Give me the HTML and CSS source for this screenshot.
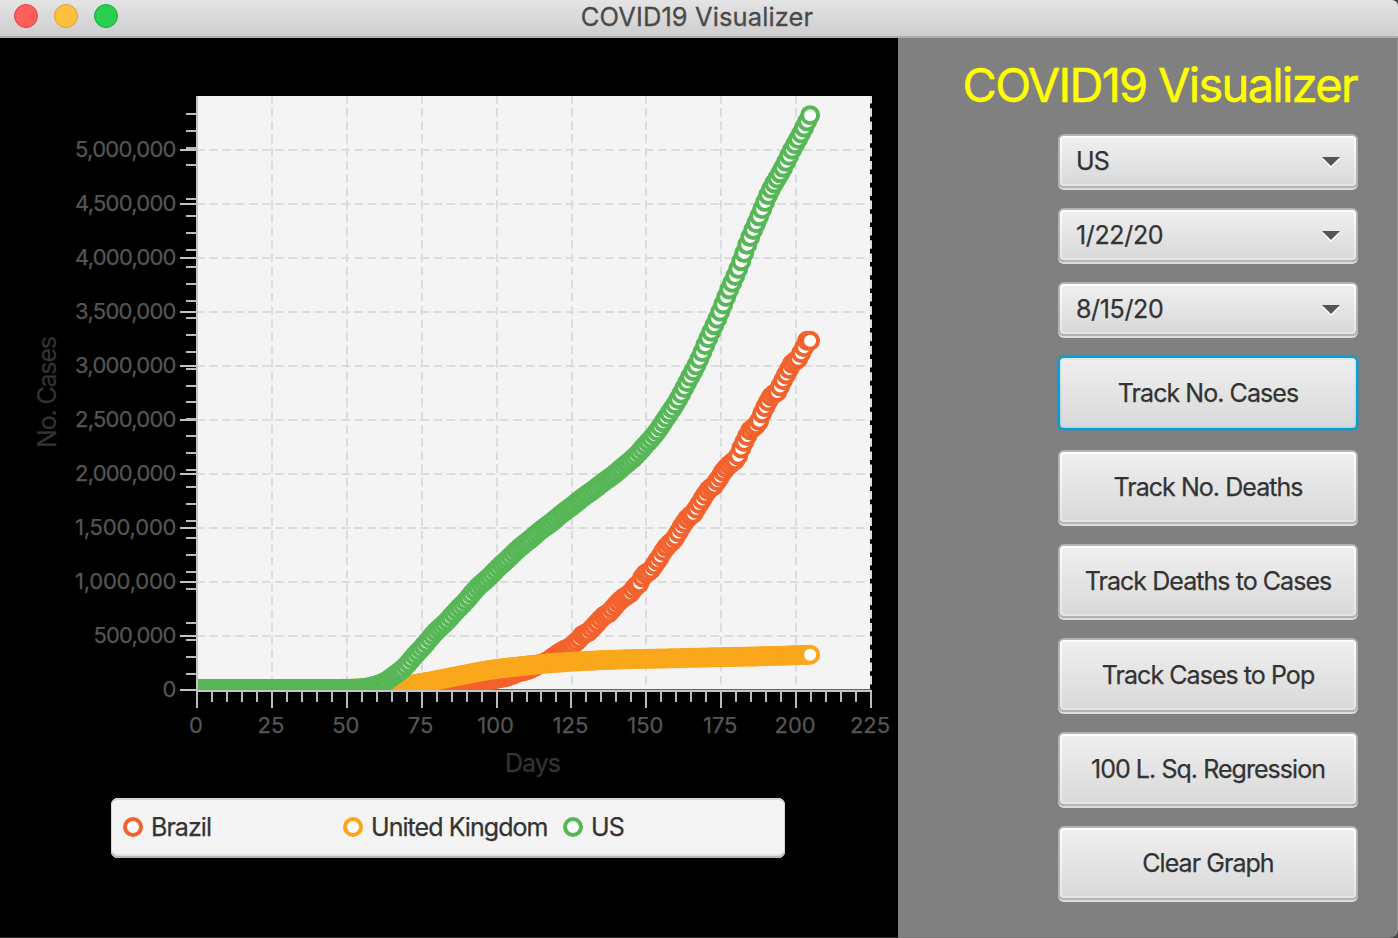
FILE: index.html
```
<!DOCTYPE html>
<html lang="en">
<head>
<meta charset="utf-8">
<title>COVID19 Visualizer</title>
<link rel="stylesheet" href="styles.css">
</head>
<body>
<div class="window">
  <header class="titlebar">
    <div class="lights"><span class="light red"></span><span class="light amber"></span><span class="light green"></span></div>
    <div class="window-title">COVID19 Visualizer</div>
  </header>
  <main class="content">
    <section class="chart-pane">
      <svg class="chart" id="chart" width="898" height="752" viewBox="0 38 898 752"></svg>
      <div class="legend">
        <div class="legend-item"><span class="dot brazil"></span>Brazil</div>
        <div class="legend-item"><span class="dot uk"></span>United Kingdom</div>
        <div class="legend-item"><span class="dot us"></span>US</div>
      </div>
    </section>
    <aside class="side">
      <h1 class="heading">COVID19 Visualizer</h1>
      <div class="controls">
        <div class="control combo"><span class="face"><span>US</span><svg class="arrow" width="18" height="12" viewBox="0 0 18 12"><path d="M0 2H18L9 11Z" fill="#fff"/><path d="M0 0H18L9 9Z" fill="#555"/></svg></span></div>
        <div class="control combo date"><span class="face"><span>1/22/20</span><svg class="arrow" width="18" height="12" viewBox="0 0 18 12"><path d="M0 2H18L9 11Z" fill="#fff"/><path d="M0 0H18L9 9Z" fill="#555"/></svg></span></div>
        <div class="control combo date"><span class="face"><span>8/15/20</span><svg class="arrow" width="18" height="12" viewBox="0 0 18 12"><path d="M0 2H18L9 11Z" fill="#fff"/><path d="M0 0H18L9 9Z" fill="#555"/></svg></span></div>
        <button class="control action focused"><span class="face">Track No. Cases</span></button>
        <button class="control action"><span class="face">Track No. Deaths</span></button>
        <button class="control action"><span class="face">Track Deaths to Cases</span></button>
        <button class="control action"><span class="face">Track Cases to Pop</span></button>
        <button class="control action"><span class="face">100 L. Sq. Regression</span></button>
        <button class="control action"><span class="face">Clear Graph</span></button>
      </div>
    </aside>
  </main>
</div>
<script src="chart.js"></script>
</body>
</html>
```
FILE: styles.css
```
* { box-sizing: border-box; }
body { margin: 0; background: #444; font-family: Inter, "Liberation Sans", sans-serif; color: #333; }
.window { width: 1398px; height: 938px; overflow: hidden; display: flex; flex-direction: column; border-radius: 0 6px 8px 0; }
.titlebar { height: 38px; flex: none; display: grid; grid-template-columns: 1fr auto 1fr; align-items: start; background: linear-gradient(#e4e4e4, #cecece); border-bottom: 2px solid #acacac; }
.lights { display: flex; gap: 16px; padding: 4px 0 0 14px; }
.light { width: 24px; height: 24px; border-radius: 50%; border: 1px solid; }
.red { background: #ff5f5a; border-color: #e2443f; }
.amber { background: #ffc03f; border-color: #dea034; }
.green { background: #29cf4e; border-color: #1bab33; }
.window-title { font-size: 25.5px; line-height: 34px; letter-spacing: 0.1px; padding-right: 4px; color: #4a4a4a; -webkit-text-stroke: 0.3px #4a4a4a; }
.content { flex: 1; display: flex; min-height: 0; }
.chart-pane { width: 898px; background: #000; border-bottom: 1px solid #2c2c2c; }
.chart { display: block; }
.tick-label { font-size: 22px; fill: #565656; stroke: #565656; stroke-width: 0.25px; }
.axis-label { font-size: 25px; fill: #333; stroke: #333; stroke-width: 0.25px; }
.legend { margin: 8px 0 0 111px; width: 674px; height: 60px; border-radius: 7px; padding: 0 12px 2px; display: grid; grid-template-columns: 220px 220px 1fr; align-items: center; background: #f4f4f4; box-shadow: inset 0 -2px #b8b8b8, inset 0 2px #d4d4d4, inset 0 -4px #e2e2e2, inset 1px 0 #d8d8d8, inset -1px 0 #d8d8d8; font-size: 25px; letter-spacing: -0.95px; -webkit-text-stroke: 0.25px #333; }
.legend-item { display: flex; align-items: center; gap: 8px; white-space: nowrap; }
.dot { width: 20px; height: 20px; border-radius: 50%; border: 4px solid; background: #fff; }
.brazil { border-color: #f3622d; }
.uk { border-color: #fba71b; }
.us { border-color: #57b757; }
.side { flex: 1; background: #808080; padding: 17px 40px 0 0; border-right: 1px solid #9a9a9a; border-bottom: 1px solid #777; border-radius: 0 0 8px 0; display: flex; flex-direction: column; align-items: flex-end; }
.heading { margin: 0; font-size: 47px; line-height: 60px; height: 79px; font-weight: 400; letter-spacing: -1.7px; color: #ff0; white-space: nowrap; -webkit-text-stroke: 0.5px #ff0; }
.controls { width: 300px; margin-right: -1px; display: flex; flex-direction: column; gap: 20px; }
.control { display: block; width: 300px; padding: 2px; border: 2px solid #b4b4b4; border-radius: 6px; background: linear-gradient(#fff, #e4e4e4); box-shadow: 0 2px #dedede; font: inherit; font-size: 25px; letter-spacing: -0.95px; color: #333; -webkit-text-stroke: 0.25px #333; }
.combo { height: 54px; }
.date { letter-spacing: -0.35px; }
.action { height: 74px; }
.face { display: flex; align-items: center; justify-content: center; height: 100%; border-radius: 2px; background: linear-gradient(#efefef, #d9d9d9); white-space: nowrap; }
.combo .face { justify-content: space-between; padding: 0 14px; }
.arrow { margin-top: 4px; }
.focused { border-color: #039ed3; background: linear-gradient(#dcebf1, #c0d4dc); box-shadow: 0 0 2px 1px rgba(3, 158, 211, .45); }
```
FILE: chart.js
```
const DX = 2.9956, Y0 = 689, PER_MILLION = 108;
const px = d => 196 + d * DX;
const py = v => Y0 - v / 1e6 * PER_MILLION;

// Monotone cubic interpolation of [day, thousands] knots to one value per day.
function daily(knots, weekly) {
  const n = knots.length, s = [], m = [];
  for (let i = 0; i < n - 1; i++) s.push((knots[i + 1][1] - knots[i][1]) / (knots[i + 1][0] - knots[i][0]));
  for (let i = 0; i < n; i++) {
    if (i === 0) m.push(s[0]);
    else if (i === n - 1) m.push(s[n - 2]);
    else m.push(s[i - 1] * s[i] <= 0 ? 0 : 2 * s[i - 1] * s[i] / (s[i - 1] + s[i]));
  }
  const out = [];
  let k = 0;
  for (let d = 0; d <= 205; d++) {
    while (k < n - 2 && d > knots[k + 1][0]) k++;
    const h = knots[k + 1][0] - knots[k][0], t = (d - knots[k][0]) / h;
    let v = knots[k][1] * (2 * t ** 3 - 3 * t * t + 1) + m[k] * h * (t ** 3 - 2 * t * t + t)
      + knots[k + 1][1] * (3 * t * t - 2 * t ** 3) + m[k + 1] * h * (t ** 3 - t * t);
    const slope = m[k] * (1 - t) + m[k + 1] * t;
    v += weekly * slope * Math.cos(2 * Math.PI * (d - 3) / 7);
    out.push(v * 1000);
  }
  return out;
}

const us = daily([[0,0],[45,.3],[53,3.5],[58,19],[63,66],[66,121],[69,188],[74,337],[79,497],[84,637],[89,784],[94,939],[99,1069],[104,1204],[109,1329],[114,1443],[119,1552],[124,1662],[130,1790],[135,1892],[140,1998],[145,2114],[150,2255],[155,2428],[160,2640],[165,2889],[170,3180],[175,3498],[180,3825],[185,4178],[191,4570],[196,4830],[201,5094],[205,5310]], .09);
const uk = daily([[0,0],[50,.5],[60,8],[66,18],[70,34],[75,55],[80,80],[89,130],[99,180],[109,213],[119,240],[130,260],[145,276],[160,285],[175,295],[190,304],[205,317]], 0);
const brazil = daily([[0,0],[60,1.5],[70,6.8],[84,28.3],[93,59],[99,87]], 0).slice(0, 100).concat([
  92202,97100,101826,108620,115455,126611,135773,146894,156061,162699,169594,178214,190137,203165,220291,233511,241080,255368,271885,291579,310087,330890,347398,363211,374898,391222,411821,438238,465166,498440,514849,
  526447,555383,584016,614941,645771,672846,691758,707412,739503,772416,802828,828810,850514,867624,888271,923189,955377,978142,1032913,1067579,1083341,1106470,1145906,1188631,1228114,1274974,1313667,1344143,1368195,1402041,
  1448753,1496858,1539081,1577004,1603055,1623284,1668589,1713160,1755779,1800827,1839850,1864681,1884967,1926824,1966748,2012151,2046328,2074860,2098389,2118646,2159654,2227514,2287475,2343366,2394513,2419091,2442375,2483191,2552265,2610102,2662485,
  2707877,2733677,2750318,2801921,2859073,2912212,2962442,3012412,3035422,3057470,3109630,3164785,3224876,3224876]);

const out = [];
const line = (x1, y1, x2, y2, c, w = 2, extra = '') =>
  out.push(`<line x1="${x1}" y1="${y1}" x2="${x2}" y2="${y2}" stroke="${c}" stroke-width="${w}" ${extra}/>`);
const dash = 'stroke-dasharray="6.6 6.6" stroke-linecap="square"';

out.push('<defs><clipPath id="plot"><rect x="198" y="96" width="674" height="594"/></clipPath></defs>');
out.push('<rect x="197" y="96" width="673" height="594" fill="#f4f4f4"/>');
out.push('<g clip-path="url(#plot)">');
for (let i = 1; i <= 9; i++) line(Math.round(197 + i * 74.9), 96, Math.round(197 + i * 74.9), 689, '#dcdcdc', 2, dash);
for (let i = 1; i <= 10; i++) line(197, 690 - i * 54, 869, 690 - i * 54, '#dcdcdc', 2, dash);
line(197, 689.5, 871, 689.5, '#666', 1);
for (const [data, c] of [[brazil, '#f3622d'], [uk, '#fba71b'], [us, '#57b757']]) {
  out.push(`<polyline fill="none" stroke="${c}" stroke-width="6" points="${data.map((v, d) => px(d).toFixed(2) + ',' + py(v).toFixed(2)).join(' ')}"/>`);
  data.forEach((v, d) => out.push(`<circle cx="${px(d).toFixed(2)}" cy="${py(v).toFixed(2)}" r="8" fill="#fff" stroke="${c}" stroke-width="4"/>`));
}
out.push('</g>');

line(197, 96, 197, 692, '#c4c4c4');
line(196, 691, 872, 691, '#c4c4c4');
for (let d = 0; d <= 225; d += 5) {
  const x = Math.round(197 + d * DX);
  line(x, 692, x, d % 25 ? 702 : 708, '#bbb');
}
for (let i = 0; i <= 10; i++) line(180, 690 - i * 54, 196, 690 - i * 54, '#c4c4c4');
for (let k = 0; k <= 33; k++) {
  const y = Math.round(674 - k * 16.97);
  if (k === 4 || k === 29) continue;
  line(186, y, 196, y, '#bbb');
}
for (let i = 0; i <= 10; i++) {
  const t = (i * 500000).toLocaleString('en-US');
  const fit = i === 0 ? '' : `textLength="${i === 1 ? 83 : 101.5}"`;
  out.push(`<text class="tick-label" text-anchor="end" x="176.5" y="${697 - i * 54}" ${fit}>${t}</text>`);
}
for (let d = 0; d <= 225; d += 25) out.push(`<text class="tick-label" text-anchor="middle" x="${196 + d * DX}" y="733">${d}</text>`);
out.push('<text class="axis-label" x="505" y="772" textLength="56">Days</text>');
out.push('<text class="axis-label" transform="translate(56 448) rotate(-90)" textLength="112">No. Cases</text>');
document.getElementById('chart').innerHTML = out.join('');
```
